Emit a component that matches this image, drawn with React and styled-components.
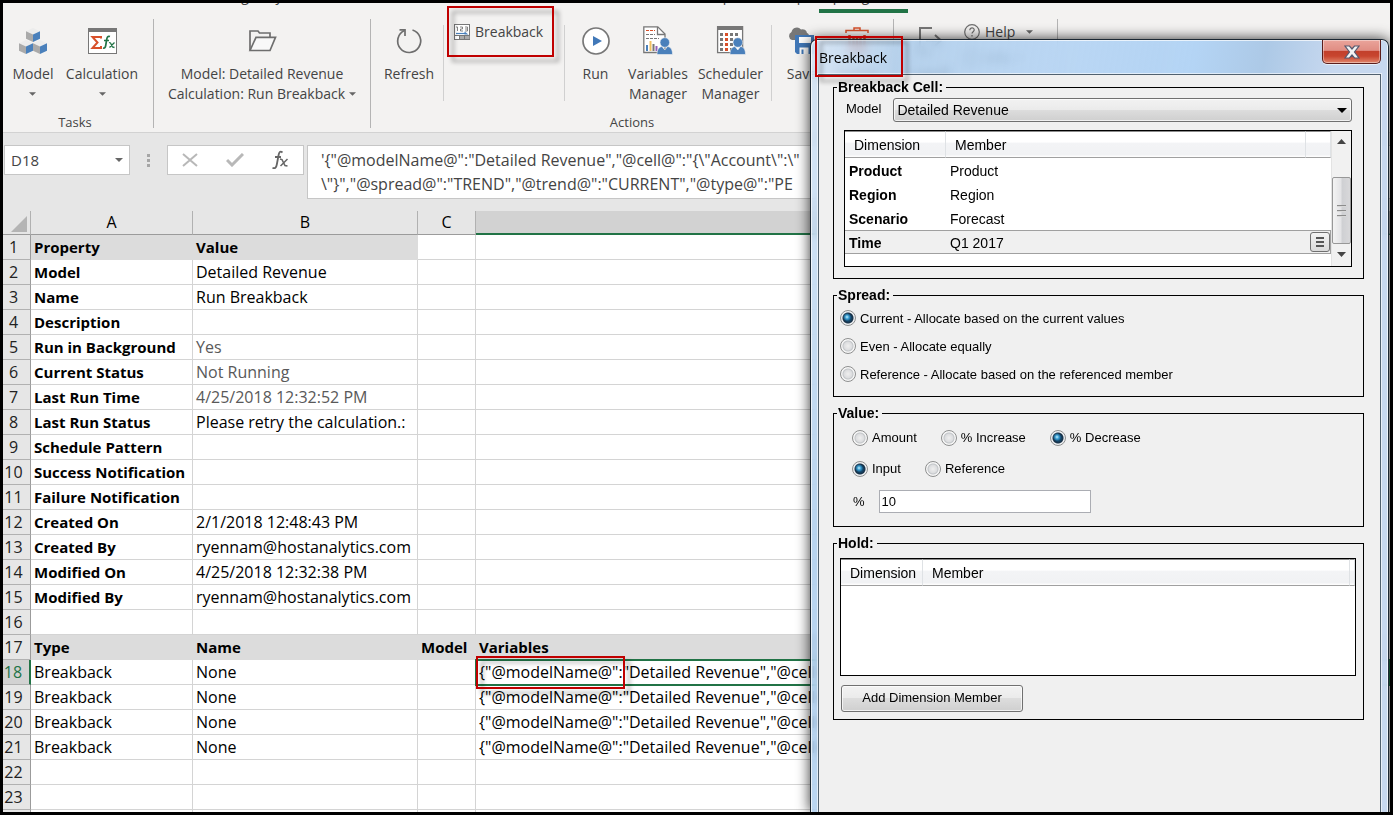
import React from "react";
import styled, { createGlobalStyle, css } from "styled-components";

const GlobalStyle = createGlobalStyle`
  * { box-sizing: border-box; }
  html, body { margin: 0; padding: 0; }
  button, input, select, textarea { font: inherit; color: inherit; margin: 0; }
`;

const ui = `"Open Sans", "Noto Sans", sans-serif`;
const dialogFont = `"Liberation Sans", Arial, sans-serif`;

/* ---------- window frame ---------- */

const Frame = styled.main`
  position: relative;
  display: flex;
  flex-direction: column;
  height: 100vh;
  border: 3px solid #000;
  background: #e6e6e6;
  overflow: hidden;
  font-family: ${ui};
`;

/* ---------- ribbon ---------- */

const Tabs = styled.nav`
  display: flex;
  align-items: flex-end;
  height: 10px;
  flex: none;
  overflow: hidden;
  background: #f3f2f1;
  padding-left: 216px;
  font-size: 14px;
  line-height: 20px;
  color: #444;
`;

const Tab = styled.a`
  flex: none;
  color: inherit;
  text-decoration: none;
  white-space: nowrap;
  padding: 0 6px 3px;
  width: ${(p) => p.$width}px;
  border-bottom: 4px solid ${(p) => (p.$active ? "#217346" : "transparent")};
`;

const Ribbon = styled.header`
  display: flex;
  flex: none;
  height: 120px;
  background: #f3f2f1;
  border-bottom: 1px solid #d2d2d2;
  color: #444;
  font-size: 14px;
  line-height: 20px;
`;

const Group = styled.section`
  display: flex;
  flex-direction: column;
  justify-content: space-between;
  flex: none;
  width: ${(p) => p.$width}px;
  padding: 6px ${(p) => p.$end || 0}px 2px 0;
`;

const GroupRow = styled.div`
  display: flex;
  padding-left: ${(p) => p.$start || 0}px;
`;

const Caption = styled.div`
  text-align: center;
  font-size: 13px;
  line-height: 16px;
`;

const Rule = styled.i`
  flex: none;
  width: 1px;
  margin: ${(p) => (p.$inner ? "6px 0 0" : "6px 0 4px")};
  height: ${(p) => (p.$inner ? "76px" : "auto")};
  background: ${(p) => (p.$inner ? "#d0d0d0" : "#b4b4b4")};
`;

const BigButton = styled.button`
  display: flex;
  flex-direction: column;
  align-items: center;
  gap: 7px;
  flex: none;
  width: ${(p) => p.$width}px;
  padding: 6px 0 0;
  border: 0;
  background: none;
  white-space: nowrap;
`;

const IconBox = styled.span`
  display: flex;
  align-items: center;
  justify-content: center;
  height: 32px;
`;

const Line = styled.span`
  display: flex;
  align-items: center;
  justify-content: center;
  gap: 4px;
  height: 20px;
`;

const SmallButton = styled.button`
  display: flex;
  align-items: center;
  gap: 5px;
  height: 26px;
  padding: 0;
  border: 0;
  background: none;
`;

const SmallStack = styled.div`
  display: flex;
  flex-direction: column;
  flex: none;
  width: ${(p) => p.$width}px;
  padding-left: ${(p) => p.$start || 0}px;
`;

const Caret = ({ size = 7, color = "#666" }) => (
  <svg width={size} height={Math.ceil(size / 2)} viewBox="0 0 8 4" aria-hidden="true">
    <path d="M0 0h8L4 4z" fill={color} />
  </svg>
);

const CaretSlot = styled.span`
  display: flex;
  padding-left: 6px;
`;

const Cube = ({ x, y }) => (
  <g transform={`translate(${x} ${y})`}>
    <path d="M0 3.2 7 0l7 3.2L7 6.5z" fill="#ececec" />
    <path d="M0 3.2 7 6.5V14L0 10.8z" fill="#aaa" />
    <path d="M14 3.2 7 6.5V14l7-3.2z" fill="#4a80bb" />
  </g>
);

const CubesIcon = () => (
  <svg width="28" height="28" viewBox="0 0 28 28">
    <Cube x={7} y={1} />
    <Cube x={0} y={13} />
    <Cube x={14} y={13} />
  </svg>
);

const CalcIcon = () => (
  <svg width="29" height="26" viewBox="0 0 29 26">
    <rect x=".5" y=".5" width="28" height="25" fill="#fff" stroke="#777" />
    <path d="M0 0h29v4H0z" fill="#777" />
    <path d="M13 10.500V9H4.500l5 5.500-5 5.500H13v-2" fill="none" stroke="#d8502a" strokeWidth="2" />
    <path d="M22 8.500c-2.500-.8-3 1-3.300 3l-1 6c-.3 2-1 3-2.700 2.500M16 12.500h5" fill="none" stroke="#217346" strokeWidth="1.700" />
    <path d="m21 14.500 1.500.5 2 4 2 .5M26.500 14.500l-5 5" fill="none" stroke="#217346" strokeWidth="1.300" />
  </svg>
);

const FolderIcon = () => (
  <svg width="29" height="24" viewBox="0 0 29 24" fill="none" stroke="#6e6e6e" strokeWidth="1.700">
    <path d="M2 21V2h8l1.500 2H22v4" />
    <path d="M2 21.500 8 8.300h19.500L22 21.500z" fill="#f8f8f8" />
  </svg>
);

const RefreshIcon = () => (
  <svg width="28" height="28" viewBox="0 0 28 28" fill="none" stroke="#6e6e6e" strokeWidth="1.700">
    <path d="M17.500 3A11.500 11.500 0 1 1 9.500 3.500" />
    <path d="M4.500 2.800H10v6.200" />
  </svg>
);

const GridIcon = () => (
  <svg width="16" height="16" viewBox="0 0 16 16">
    <rect x=".5" y=".5" width="15" height="15" fill="#fff" stroke="#777" />
    <path d="M2 3h1.500v4M6 3h2.500v2H6.500v2H9M11 3h2.500v4H11M11 5h2" fill="none" stroke="#777" strokeWidth=".9" />
    <path d="M2 9.500h9" stroke="#4a80bb" strokeWidth="1.200" />
    <path d="m10.500 7.500 4 3h-4z" fill="#4a80bb" />
    <path d="M0 11.500h16" stroke="#777" />
    <path d="M5.500 12h10v3h-10z" fill="#aaa" />
    <path d="M5.500 11v5M10.500 11v5" stroke="#777" />
  </svg>
);

const RunIcon = () => (
  <svg width="28" height="28" viewBox="0 0 28 28">
    <circle cx="14" cy="14" r="13" fill="#fff" stroke="#777" strokeWidth="1.700" />
    <path d="M11 9v10l9-5z" fill="#4178b8" />
  </svg>
);

const Person = () => (
  <g fill="#4a80bb">
    <path d="M14 28.500c0-5 2-7.500 5-8l2.800 3.500 2.700-3.500c3.500.5 5 3 5 8z" stroke="#f3f2f1" strokeWidth=".6" />
    <circle cx="21.800" cy="16.500" r="4.800" stroke="#f3f2f1" strokeWidth=".6" />
  </g>
);

const VariablesIcon = () => (
  <svg width="30" height="30" viewBox="0 0 30 30">
    <path d="M.8.800h14L22 8v18.500H.8z" fill="#fff" stroke="#777" strokeWidth="1.300" />
    <path d="M14.500 1v7.500H22" fill="none" stroke="#777" strokeWidth="1.300" />
    <path d="M3 4.500h9" stroke="#d8502a" strokeDasharray="3 1" />
    <path d="M3 8.500h9M3 12.500h13" stroke="#777" strokeDasharray="3 1" />
    <path d="M4 19v6" stroke="#4a80bb" strokeWidth="2" />
    <path d="M7.500 15v10" stroke="#f0c060" strokeWidth="2" />
    <path d="M10.500 18v7" stroke="#777" strokeWidth="2" />
    <path d="M13.500 20v5" stroke="#9660b8" strokeWidth="2" />
    <Person />
  </svg>
);

const SchedulerIcon = () => (
  <svg width="30" height="30" viewBox="0 0 30 30">
    <rect x="1.600" y=".6" width="25" height="26" fill="#fff" stroke="#777" strokeWidth="1.300" />
    <path d="M1 0h26v4H1z" fill="#777" />
    <g strokeWidth="3" strokeDasharray="3 2" stroke="#777">
      <path d="M4 8.500h19M4 13.500h19M4 18.500h19M4 23.500h14" />
    </g>
    <path d="M10.500 7v18" stroke="#d8502a" strokeWidth="3" strokeDasharray="3 2" />
    <path d="M19 13.500h3" stroke="#d8502a" strokeWidth="3" />
    <Person />
  </svg>
);

const SaveIcon = () => (
  <svg width="30" height="30" viewBox="0 0 30 30">
    <path d="M5 14a5 4.500 0 0 1-.5-8A5.500 5.500 0 0 1 14 3.500 4.500 4.500 0 0 1 20 7c3 1 2.500 5 0 7z" fill="#777" />
    <path d="M8 9h19v19H10l-2-2z" fill="#4178b8" />
    <path d="M12 11h12v6H12zM12.500 21.500h9V28h-9z" fill="#fff" />
    <path d="M15.500 23.500v4.500" stroke="#4178b8" strokeWidth="2" />
  </svg>
);

const TrashIcon = () => (
  <svg width="24" height="28" viewBox="0 0 24 28" fill="none" stroke="#d8502a">
    <path d="M1 6V3.500h22V6M9 3V1h6v2" strokeWidth="1.500" />
    <path d="M4.500 8v17.500h15V8M8.500 9v14M12 9v14M15.500 9v14" strokeWidth="2.500" />
  </svg>
);

const LogoffIcon = () => (
  <svg width="26" height="28" viewBox="0 0 26 28" fill="none" stroke="#777" strokeWidth="2">
    <path d="M16 1H4v25h12M19 8l6 5.500-6 5.500M10 13.500h14" />
  </svg>
);

const CircleMark = ({ info }) => (
  <svg width="16" height="16" viewBox="0 0 16 16" fill="none" stroke="#6e6e6e" strokeWidth="1.200">
    <circle cx="8" cy="8" r="7.300" />
    {info ? (
      <path d="M8 7v5M8 4v1.500" />
    ) : (
      <path d="M5.800 6.200C5.800 3 10.300 3.200 10.200 6c0 1.600-2.200 1.800-2.200 3.500M8 11v1.500" />
    )}
  </svg>
);

const RedFrame = styled.div`
  position: absolute;
  left: ${(p) => p.$x}px;
  top: ${(p) => p.$y}px;
  width: ${(p) => p.$w}px;
  height: ${(p) => p.$h}px;
  border: 2px solid #c00000;
  filter: drop-shadow(5px 5px 2px rgba(0, 0, 0, 0.35));
  pointer-events: none;
`;

/* ---------- formula bar ---------- */

const FormulaBar = styled.div`
  display: flex;
  align-items: flex-start;
  flex: none;
  padding: 12px 0 12px 1px;
  font-size: 16px;
  color: #444;
`;

const Box = styled.div`
  display: flex;
  align-items: center;
  justify-content: space-between;
  width: ${(p) => p.$width}px;
  height: 30px;
  padding: 0 ${(p) => p.$pad}px;
  background: #fff;
  border: 1px solid #c6c6c6;
`;

const NameInput = styled.input`
  width: 90px;
  padding: 0;
  border: 0;
  outline: 0;
  background: none;
  font-size: 15px;
`;

const PlainButton = styled.button`
  display: flex;
  padding: 0;
  border: 0;
  background: none;
`;

const Dots = styled.span`
  display: flex;
  flex-direction: column;
  align-items: center;
  justify-content: center;
  gap: 2px;
  width: 37px;
  height: 30px;
  &::before, &::after, i {
    content: "";
    width: 3px;
    height: 3px;
    background: #a6a6a6;
  }
`;

const FormulaText = styled.textarea`
  flex: 1;
  height: 54px;
  margin-left: 3px;
  padding: 2px 13px;
  border: 1px solid #c6c6c6;
  border-right: 0;
  outline: 0;
  resize: none;
  overflow: hidden;
  white-space: pre;
  line-height: 24px;
  background: #fff;
`;

/* ---------- sheet ---------- */

const SheetArea = styled.div`
  flex: 1;
  min-height: 0;
  overflow: hidden;
`;

const Sheet = styled.table`
  width: 100%;
  table-layout: fixed;
  border-collapse: separate;
  border-spacing: 0;
  font-size: 16px;
  line-height: 24px;
  color: #000;
`;

const ColHead = styled.th`
  height: 24px;
  padding: 0;
  font-weight: 400;
  line-height: 23px;
  background: ${(p) => (p.$active ? "#d2d2d2" : "#e6e6e6")};
  border-right: 1px solid #b1b1b1;
  border-bottom: ${(p) => (p.$active ? "2px solid #217346" : "1px solid #9b9b9b")};
`;

const Corner = styled(ColHead)`
  svg { display: block; margin: 2px 3px 0 auto; }
`;

const RowHead = styled.th`
  height: 25px;
  padding: 0 6px 0 0;
  font-weight: 400;
  text-align: center;
  background: ${(p) => (p.$active ? "#d2d2d2" : "#e6e6e6")};
  color: ${(p) => (p.$active ? "#217346" : "#222")};
  border-right: ${(p) => (p.$active ? "2px solid #217346" : "1px solid #9b9b9b")};
  border-bottom: 1px solid #b1b1b1;
`;

const Cell = styled.td`
  height: 25px;
  padding: 0 0 0 3px;
  white-space: nowrap;
  overflow: hidden;
  background: #fff;
  border-right: 1px solid #d4d4d4;
  border-bottom: 1px solid #d4d4d4;
  color: ${(p) => (p.$muted ? "#595959" : "#000")};
  ${(p) =>
    p.$bold &&
    css`
      font-size: 15px;
      font-weight: 700;
    `}
  ${(p) =>
    p.$shaded &&
    css`
      background: #dcdcdc;
      border-color: #dcdcdc;
    `}
  ${(p) =>
    p.$selected &&
    css`
      outline: 2px solid #217346;
      outline-offset: -1px;
    `}
`;

const variables = `{"@modelName@":"Detailed Revenue","@cell@":"{\\"Account\\":\\"`;
const formula = `'${variables}\n\\"}","@spread@":"TREND","@trend@":"CURRENT","@type@":"PE`;

const rows = [
  { cells: ["Property", "Value"], head: 2 },
  { cells: ["Model", "Detailed Revenue"] },
  { cells: ["Name", "Run Breakback"] },
  { cells: ["Description", ""] },
  { cells: ["Run in Background", "Yes"], muted: true },
  { cells: ["Current Status", "Not Running"], muted: true },
  { cells: ["Last Run Time", "4/25/2018 12:32:52 PM"], muted: true },
  { cells: ["Last Run Status", "Please retry the calculation.:"] },
  { cells: ["Schedule Pattern", ""] },
  { cells: ["Success Notification", ""] },
  { cells: ["Failure Notification", ""] },
  { cells: ["Created On", "2/1/2018 12:48:43 PM"] },
  { cells: ["Created By", "ryennam@hostanalytics.com"] },
  { cells: ["Modified On", "4/25/2018 12:32:38 PM"] },
  { cells: ["Modified By", "ryennam@hostanalytics.com"] },
  { cells: [] },
  { cells: ["Type", "Name", "Model", "Variables"], head: 4 },
  { cells: ["Breakback", "None", "", variables], step: true, active: true },
  { cells: ["Breakback", "None", "", variables], step: true },
  { cells: ["Breakback", "None", "", variables], step: true },
  { cells: ["Breakback", "None", "", variables], step: true },
  { cells: [] },
  { cells: [] },
  { cells: [], blank: true },
];

/* ---------- dialog ---------- */

const Dialog = styled.div`
  position: absolute;
  top: 36px;
  right: 1px;
  bottom: 0;
  width: 579px;
  display: flex;
  flex-direction: column;
  border: 1px solid #1c2833;
  border-bottom: 0;
  border-radius: 7px 7px 0 0;
  padding: 0 7px;
  background: linear-gradient(
    100deg,
    rgba(212, 228, 245, 0.85) 0,
    rgba(165, 200, 234, 0.78) 90px,
    rgba(176, 209, 243, 0.85) 240px,
    rgba(176, 210, 244, 0.95) 380px,
    rgba(168, 198, 229, 0.95) 450px,
    rgba(196, 214, 238, 0.95) 520px
  );
  backdrop-filter: blur(4px);
  box-shadow: inset 1px 1px 0 rgba(255, 255, 255, 0.7), inset -1px 0 0 rgba(255, 255, 255, 0.7),
    0 0 14px rgba(0, 0, 0, 0.8);
  font-family: ${dialogFont};
  color: #000;
`;

const TitleBar = styled.div`
  display: flex;
  align-items: center;
  justify-content: space-between;
  flex: none;
  height: 34px;
  padding-left: 1px;
  font-family: ${ui};
  font-size: 14px;
`;

const CloseButton = styled.button`
  align-self: flex-start;
  display: flex;
  align-items: center;
  justify-content: center;
  width: 59px;
  height: 24px;
  padding: 0;
  border: 1px solid #5c1e1c;
  border-top: 0;
  border-radius: 0 0 5px 5px;
  background: linear-gradient(#eaa49b 0, #e08d83 45%, #c2402c 50%, #c8452f 70%, #e0866c 100%);
  box-shadow: inset 0 0 0 1px rgba(255, 255, 255, 0.4), 0 1px 0 rgba(255, 255, 255, 0.6);
`;

const DialogBody = styled.div`
  flex: 1;
  display: flex;
  flex-direction: column;
  gap: 8px;
  padding: 4px 16px 0 14px;
  background: #f0f0f0;
  border: 1px solid #51616f;
  border-bottom: 0;
  box-shadow: 0 0 0 1px rgba(255, 255, 255, 0.6);
`;

const Fieldset = styled.fieldset`
  min-width: 0;
  margin: 0;
  padding: 0 ${(p) => p.$end}px ${(p) => p.$bottom}px ${(p) => p.$start}px;
  border: 1px solid #000;
  font-size: 13px;
`;

const Legend = styled.legend`
  margin-left: ${(p) => 3 - p.$start}px;
  padding: 0 3px 0 1px;
  font-size: 14px;
  font-weight: 700;
  line-height: 16px;
`;

const ModelRow = styled.div`
  display: flex;
  align-items: flex-start;
  gap: 12px;
  padding: 3px 0 8px 2px;
  label { line-height: 22px; }
`;

const SelectWrap = styled.div`
  position: relative;
  flex: 1;
  svg {
    position: absolute;
    right: 5px;
    top: 10px;
    pointer-events: none;
  }
`;

const Select = styled.select`
  display: block;
  appearance: none;
  width: 100%;
  height: 24px;
  padding: 0 3px;
  border: 1px solid #707070;
  border-radius: 3px;
  background: linear-gradient(#f2f2f2 0, #ebebeb 48%, #dddddd 50%, #cfcfcf 100%);
  box-shadow: inset 0 0 0 1px rgba(255, 255, 255, 0.7);
  font-size: 14px;
`;

const ListBox = styled.div`
  display: flex;
  align-items: stretch;
  height: ${(p) => p.$height}px;
  border: 1px solid #000;
  background: #fff;
`;

const List = styled.table`
  flex: 1;
  align-self: flex-start;
  table-layout: fixed;
  border-collapse: separate;
  border-spacing: 0;
  font-size: 14px;
  th, td { text-align: left; white-space: nowrap; padding: 0; }
  thead th {
    height: 27px;
    padding: 1px 0 0 9px;
    font-weight: 400;
    border-top: 1px solid #8c8c8c;
    border-right: 1px solid #dfe2e5;
    border-bottom: 1px solid #a0a0a0;
    background: linear-gradient(#fff 0, #fff 40%, #f3f4f6 45%, #f1f2f4 90%, #fff 100%);
  }
  thead th:last-child { padding: 0; }
  tbody th, tbody td { height: 24px; padding: 2px 0 0 4px; }
  tbody th { font-weight: 700; }
  tbody tr:last-child th, tbody tr:last-child td {
    padding-top: 1px;
    background: #f0f0f0;
    border-top: 1px solid #a0a0a0;
    border-bottom: 1px solid #a0a0a0;
  }
  tbody tr:last-child td:last-child {
    padding-top: 0;
    border-right: 1px solid #a0a0a0;
  }
`;

const PickButton = styled.button`
  display: flex;
  align-items: center;
  justify-content: center;
  width: 20px;
  height: 20px;
  padding: 0;
  border: 1px solid #707070;
  border-radius: 3px;
  background: linear-gradient(#f4f4f4, #e6e6e6 50%, #dadada);
`;

const ScrollBar = styled.div`
  display: flex;
  flex-direction: column;
  align-items: center;
  width: 20px;
  padding: 8px 0 9px;
  background: #f1f1f1;
  border-left: 1px solid #e3e3e3;
`;

const Thumb = styled.span`
  display: flex;
  flex-direction: column;
  align-items: center;
  justify-content: center;
  gap: 3px;
  width: 19px;
  height: 67px;
  margin: auto 0 8px;
  border: 1px solid #979797;
  border-radius: 2px;
  background: linear-gradient(90deg, #f3f3f3 0, #e4e4e6 45%, #cfd0d3 55%, #d8d8da 100%);
  i { width: 9px; height: 2px; background: linear-gradient(#666, #fff); }
`;

const RadioLabel = styled.label`
  display: flex;
  align-items: center;
  gap: 4px;
`;

const Radio = styled.input.attrs({ type: "radio" })`
  appearance: none;
  width: 16px;
  height: 16px;
  border: 1px solid #8e8f8f;
  border-radius: 50%;
  background: radial-gradient(circle at center, #efefef 0, #dcdddf 4px, #c2c5c8 5px, #f6f6f6 6px) border-box;
  &:checked {
    background:
      radial-gradient(circle at 7px 7px, #c4f0ff 0, rgba(60, 170, 225, 0.8) 2px, transparent 4px) border-box,
      radial-gradient(circle at center, #1b6fa5 0, #143a58 4px, #1a3146 5px, #eef0f2 6px) border-box;
  }
`;

const Spread = styled.div`
  display: grid;
  grid-auto-rows: 28px;
  padding: 1px 0;
`;

const ValueRow = styled.div`
  display: flex;
  align-items: center;
  gap: 24px;
  height: 31px;
`;

const PercentRow = styled.div`
  display: flex;
  align-items: center;
  gap: 14px;
  padding: 6px 0 0 1px;
`;

const ValueContent = styled.div`
  padding-top: 1px;
`;

const TextInput = styled.input`
  width: 212px;
  height: 23px;
  padding: 0 2px;
  border: 1px solid #abadb3;
  background: #fff;
  font-size: 13px;
`;

const AddButton = styled.button`
  width: 182px;
  height: 27px;
  margin: 9px 0 0 1px;
  padding: 0 0 2px;
  border: 1px solid #707070;
  border-radius: 3px;
  background: linear-gradient(#f2f2f2 0, #ebebeb 48%, #dddddd 50%, #cfcfcf 100%);
  box-shadow: inset 0 0 0 1px rgba(255, 255, 255, 0.7);
`;

const HoldContent = styled.div`
  padding-top: 7px;
`;

const dimensions = [
  ["Product", "Product"],
  ["Region", "Region"],
  ["Scenario", "Forecast"],
  ["Time", "Q1 2017"],
];

function RibbonItem({ width, icon, lines, caret }) {
  return (
    <BigButton type="button" $width={width}>
      <IconBox>{icon}</IconBox>
      <span>
        {lines.map((text, i) => (
          <Line key={text}>
            {text}
            {caret === "inline" && i === lines.length - 1 && <Caret />}
          </Line>
        ))}
        {caret === "below" && (
          <Line>
            <Caret />
          </Line>
        )}
      </span>
    </BigButton>
  );
}

function Choice({ name, label, checked }) {
  return (
    <RadioLabel>
      <Radio name={name} defaultChecked={checked} />
      {label}
    </RadioLabel>
  );
}

function BreakbackDialog() {
  return (
    <Dialog role="dialog" aria-labelledby="dialog-title">
      <TitleBar>
        <span id="dialog-title">Breakback</span>
        <CloseButton type="button" aria-label="Close">
          <svg width="16" height="14" viewBox="0 0 16 14">
            <path
              d="M1 1h4.500L8 4l2.500-3H15l-4.500 6 4.500 6h-4.500L8 10l-2.500 3H1l4.500-6z"
              fill="#f4f4f4"
              stroke="#565a70"
              strokeWidth="1.200"
            />
          </svg>
        </CloseButton>
      </TitleBar>
      <DialogBody>
        <Fieldset $start={10} $end={11} $bottom={11}>
          <Legend $start={10}>Breakback Cell:</Legend>
          <ModelRow>
            <label htmlFor="model">Model</label>
            <SelectWrap>
              <Select id="model" defaultValue="Detailed Revenue">
                <option>Detailed Revenue</option>
              </Select>
              <Caret size={10} color="#000" />
            </SelectWrap>
          </ModelRow>
          <ListBox $height={137}>
            <List>
              <colgroup>
                <col style={{ width: 101 }} />
                <col />
                <col style={{ width: 25 }} />
              </colgroup>
              <thead>
                <tr>
                  <th>Dimension</th>
                  <th>Member</th>
                  <th aria-label="Pick" />
                </tr>
              </thead>
              <tbody>
                {dimensions.map(([dimension, member], i) => (
                  <tr key={dimension}>
                    <th scope="row">{dimension}</th>
                    <td>{member}</td>
                    <td>
                      {i === dimensions.length - 1 && (
                        <PickButton type="button" aria-label="Pick member">
                          <svg width="8" height="10" viewBox="0 0 8 10">
                            <path d="M0 1h8M0 5h8M0 9h8" stroke="#555" strokeWidth="2" />
                          </svg>
                        </PickButton>
                      )}
                    </td>
                  </tr>
                ))}
              </tbody>
            </List>
            <ScrollBar aria-hidden="true">
              <svg width="9" height="5" viewBox="0 0 9 5">
                <path d="M0 5h9L4.500 0z" fill="#444" />
              </svg>
              <Thumb>
                <i />
                <i />
                <i />
              </Thumb>
              <svg width="9" height="5" viewBox="0 0 9 5">
                <path d="M0 0h9L4.500 5z" fill="#444" />
              </svg>
            </ScrollBar>
          </ListBox>
        </Fieldset>

        <Fieldset $start={6} $end={6} $bottom={7}>
          <Legend $start={6}>Spread:</Legend>
          <Spread>
            <Choice name="spread" label="Current - Allocate based on the current values" checked />
            <Choice name="spread" label="Even - Allocate equally" />
            <Choice name="spread" label="Reference - Allocate based on the referenced member" />
          </Spread>
        </Fieldset>

        <Fieldset $start={18} $end={18} $bottom={13}>
          <Legend $start={18}>Value:</Legend>
          <ValueContent>
            <ValueRow>
              <Choice name="kind" label="Amount" />
              <Choice name="kind" label="% Increase" />
              <Choice name="kind" label="% Decrease" checked />
            </ValueRow>
            <ValueRow>
              <Choice name="source" label="Input" checked />
              <Choice name="source" label="Reference" />
            </ValueRow>
            <PercentRow>
              <label htmlFor="percent">%</label>
              <TextInput id="percent" defaultValue="10" />
            </PercentRow>
          </ValueContent>
        </Fieldset>

        <Fieldset $start={6} $end={7} $bottom={7}>
          <Legend $start={6}>Hold:</Legend>
          <HoldContent>
            <ListBox $height={118}>
              <List>
                <colgroup>
                  <col style={{ width: 82 }} />
                  <col />
                  <col style={{ width: 5 }} />
                </colgroup>
                <thead>
                  <tr>
                    <th>Dimension</th>
                    <th>Member</th>
                    <th aria-label="Pick" />
                  </tr>
                </thead>
              </List>
            </ListBox>
            <AddButton type="button">Add Dimension Member</AddButton>
          </HoldContent>
        </Fieldset>
      </DialogBody>
    </Dialog>
  );
}

function SheetRow({ row, index }) {
  const selected = Boolean(row.active);
  return (
    <tr>
      <RowHead scope="row" $active={selected}>
        {row.blank ? "" : index + 1}
      </RowHead>
      {[0, 1, 2, 3].map((col) => (
        <Cell
          key={col}
          $bold={Boolean(row.head) || (col === 0 && !row.step)}
          $shaded={col < (row.head || 0)}
          $muted={row.muted && col === 1}
          $selected={selected && col === 3}
        >
          {row.cells[col] || ""}
        </Cell>
      ))}
    </tr>
  );
}

export default function App() {
  return (
    <>
      <GlobalStyle />
      <Frame>
        <Tabs>
          <Tab href="#layout" $width={453}>Page Layout</Tab>
          <Tab href="#developer" $width={97}>Developer</Tab>
          <Tab href="#help" $width={50}>Help</Tab>
          <Tab href="#spotlight" $width={89} $active>Spotlight</Tab>
        </Tabs>
        <Ribbon>
          <Group $width={150} $end={6}>
            <GroupRow>
              <RibbonItem width={60} icon={<CubesIcon />} lines={["Model"]} caret="below" />
              <RibbonItem width={78} icon={<CalcIcon />} lines={["Calculation"]} caret="below" />
            </GroupRow>
            <Caption>Tasks</Caption>
          </Group>
          <Rule />
          <Group $width={216}>
            <RibbonItem
              width={216}
              icon={<FolderIcon />}
              lines={["Model: Detailed Revenue", "Calculation: Run Breakback"]}
              caret="inline"
            />
          </Group>
          <Rule />
          <Group $width={522}>
            <GroupRow $start={4}>
              <RibbonItem width={68} icon={<RefreshIcon />} lines={["Refresh"]} />
              <Rule $inner />
              <SmallStack $width={120} $start={10}>
                <SmallButton type="button">
                  <GridIcon />
                  Breakback
                </SmallButton>
              </SmallStack>
              <Rule $inner />
              <RibbonItem width={61} icon={<RunIcon />} lines={["Run"]} />
              <RibbonItem width={64} icon={<VariablesIcon />} lines={["Variables", "Manager"]} />
              <RibbonItem width={81} icon={<SchedulerIcon />} lines={["Scheduler", "Manager"]} />
              <Rule $inner />
              <RibbonItem width={60} icon={<SaveIcon />} lines={["Save"]} />
              <RibbonItem width={50} icon={<TrashIcon />} lines={["Delete"]} />
            </GroupRow>
            <Caption>Actions</Caption>
          </Group>
          <Rule />
          <Group $width={163}>
            <GroupRow>
              <RibbonItem width={70} icon={<LogoffIcon />} lines={["Logoff"]} />
              <SmallStack $width={93}>
                <SmallButton type="button">
                  <CircleMark />
                  Help
                  <CaretSlot>
                    <Caret />
                  </CaretSlot>
                </SmallButton>
                <SmallButton type="button">
                  <CircleMark info />
                  Info
                  <Caret />
                </SmallButton>
              </SmallStack>
            </GroupRow>
          </Group>
          <Rule />
        </Ribbon>

        <FormulaBar>
          <Box $width={126} $pad={6}>
            <NameInput aria-label="Name box" defaultValue="D18" />
            <PlainButton type="button" aria-label="Open name list">
              <Caret size={8} />
            </PlainButton>
          </Box>
          <Dots>
            <i />
          </Dots>
          <Box $width={137} $pad={14}>
            <PlainButton type="button" aria-label="Cancel">
              <svg width="16" height="14" viewBox="0 0 16 14" stroke="#b8b8b8" strokeWidth="2">
                <path d="m1 1 14 12M15 1 1 13" />
              </svg>
            </PlainButton>
            <PlainButton type="button" aria-label="Enter">
              <svg width="18" height="14" viewBox="0 0 18 14" fill="none" stroke="#b8b8b8" strokeWidth="3">
                <path d="m1 7 5 5L17 1" />
              </svg>
            </PlainButton>
            <PlainButton type="button" aria-label="Insert function">
              <svg width="18" height="20" viewBox="0 0 18 20" fill="none" stroke="#666" strokeWidth="1.800">
                <path d="M11.500 2.500C9 .5 8 2.500 7.500 5.500l-1.700 9C5.300 17.500 4 19 1.500 17.800M4 7h6" />
                <path d="m9 9 2 .6 3 6 2.500.4M16.500 9l-7 7" strokeWidth="1.500" />
              </svg>
            </PlainButton>
          </Box>
          <FormulaText aria-label="Formula" defaultValue={formula} />
        </FormulaBar>

        <SheetArea>
          <Sheet>
            <colgroup>
              <col style={{ width: 28 }} />
              <col style={{ width: 162 }} />
              <col style={{ width: 225 }} />
              <col style={{ width: 58 }} />
              <col />
            </colgroup>
            <thead>
              <tr>
                <Corner aria-label="Select all">
                  <svg width="16" height="16" viewBox="0 0 16 16">
                    <path d="M16 0v16H0z" fill="#b4b4b4" />
                  </svg>
                </Corner>
                <ColHead>A</ColHead>
                <ColHead>B</ColHead>
                <ColHead>C</ColHead>
                <ColHead $active aria-label="D" />
              </tr>
            </thead>
            <tbody>
              {rows.map((row, i) => (
                <SheetRow key={i} row={row} index={i} />
              ))}
            </tbody>
          </Sheet>
        </SheetArea>

        <BreakbackDialog />
        <RedFrame $x={444} $y={3} $w={107} $h={51} />
        <RedFrame $x={812} $y={33} $w={88} $h={41} />
        <RedFrame $x={473} $y={653} $w={149} $h={33} />
      </Frame>
    </>
  );
}
